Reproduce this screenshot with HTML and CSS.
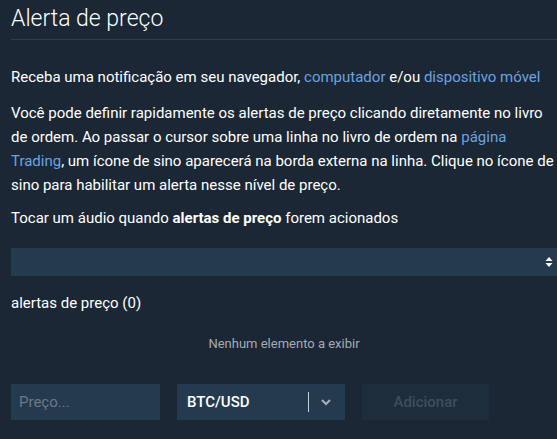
FILE: index.html
```html
<!DOCTYPE html>
<html lang="pt">
  <head>
    <meta charset="UTF-8" />
    <meta name="viewport" content="width=device-width, initial-scale=1" />
    <title>Alerta de preço</title>
    <link rel="stylesheet" href="styles.css">
  </head>
  <body>
    <div id="panel">
      <h1 class="title">Alerta de preço</h1>

      <p class="intro">
        Receba uma notificação em seu navegador, <a href="#">computador</a> e/ou <a href="#">dispositivo móvel</a>
      </p>

      <p class="help">
        Você pode definir rapidamente os alertas de preço clicando diretamente no livro<br>
        de ordem. Ao passar o cursor sobre uma linha no livro de ordem na <a href="#">página<br>
        Trading</a>, um ícone de sino aparecerá na borda externa na linha. Clique no ícone de<br>
        sino para habilitar um alerta nesse nível de preço.
      </p>

      <p class="sound">Tocar um áudio quando <strong>alertas de preço</strong> forem acionados</p>

      <div class="sound-select">
        <svg class="updown" width="8" height="12" viewBox="0 0 8 12">
          <path d="M4 1 L7.5 5 L0.5 5 Z" fill="#ffffff" />
          <path d="M4 11 L7.5 7 L0.5 7 Z" fill="#ffffff" />
        </svg>
      </div>

      <h3 class="list-title">alertas de preço (0)</h3>
      <div class="empty">Nenhum elemento a exibir</div>

      <div class="add-row">
        <input id="price" type="text" placeholder="Preço..." />
        <div class="pair">
          <span class="pair-value">BTC/USD</span>
          <span class="pair-sep"></span>
          <svg class="chevron" width="12" height="8" viewBox="0 0 12 8">
            <path d="M2 2 L6 6 L10 2" fill="none" stroke="#a7b1bc" stroke-width="2" />
          </svg>
        </div>
        <button id="button-add" disabled>Adicionar</button>
      </div>
    </div>
  </body>
</html>
```

FILE: styles.css
```css
/* Base styles */
body {
  font-family: Roboto, "Liberation Sans", Arial, sans-serif;
  background: #1b2734;
  color: #ffffff;
  margin: 0;
  overflow: hidden;
}

#panel {
  padding-left: 11px;
}

a {
  color: #6aa3e0;
  text-decoration: none;
}

/* Header */
.title {
  font-size: 23px;
  font-weight: 300;
  line-height: 26px;
  margin: 0;
  padding: 6px 0 7px;
  border-bottom: 1px solid #303e4b;
}

/* Text blocks */
p {
  font-size: 15px;
  line-height: 24px;
  margin: 0;
}

.intro {
  margin-top: 25px;
}

.help {
  margin-top: 12px;
  white-space: nowrap;
}

.sound {
  margin-top: 9px;
}

/* Sound select */
.sound-select {
  display: flex;
  justify-content: flex-end;
  align-items: center;
  height: 28px;
  margin-top: 18px;
  background: #243a4f;
}

.updown {
  margin-right: 4px;
}

/* Alert list */
.list-title {
  font-size: 15px;
  font-weight: 400;
  line-height: 20px;
  margin: 17px 0 0;
}

.empty {
  font-size: 13px;
  color: #a3acb5;
  text-align: center;
  line-height: 20px;
  margin-top: 21px;
}

/* Add row */
.add-row {
  display: flex;
  gap: 17px;
  margin-top: 30px;
}

#price {
  width: 149px;
  height: 36px;
  box-sizing: border-box;
  border: none;
  background: #243a4f;
  color: #ffffff;
  font-family: inherit;
  font-size: 15px;
  padding: 0 8px;
}

#price::placeholder {
  color: #6c7885;
}

.pair {
  display: flex;
  align-items: center;
  width: 168px;
  height: 36px;
  box-sizing: border-box;
  background: #243a4f;
  padding-left: 10px;
  font-size: 15px;
  font-weight: 500;
}

.pair-value {
  flex: 1;
}

.pair-sep {
  width: 1px;
  height: 20px;
  background: #c9d0d6;
  margin-right: 11px;
}

.chevron {
  margin-right: 13px;
}

button {
  width: 127px;
  height: 36px;
  border: none;
  background: #1e2d3b;
  color: #3f4e5d;
  font-family: inherit;
  font-size: 15px;
  font-weight: 500;
}
```
